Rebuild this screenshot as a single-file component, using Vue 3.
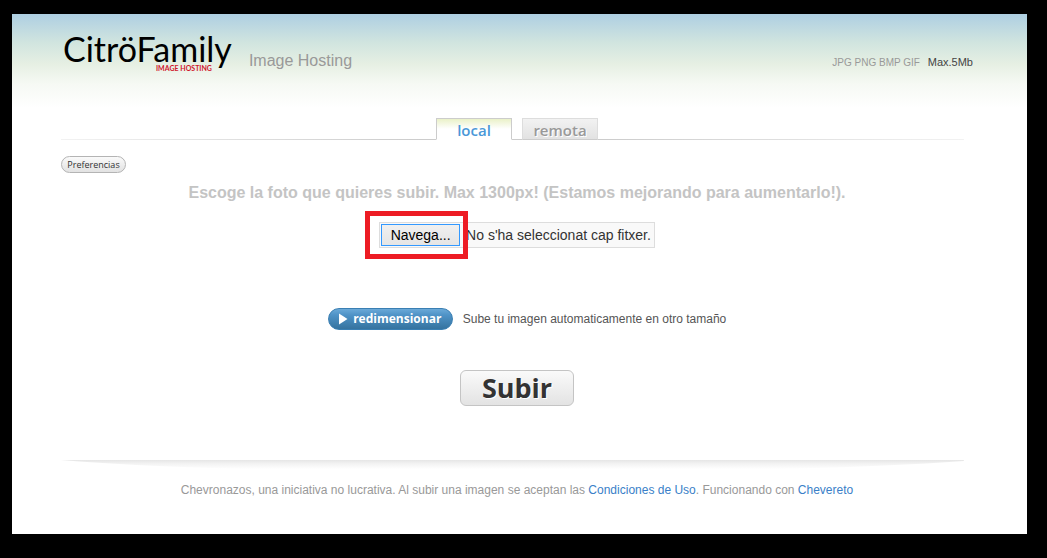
<script setup>
import { ref } from 'vue'

const tabs = [
  { id: 'local', label: 'local' },
  { id: 'remota', label: 'remota' }
]
const active = ref('local')
const picker = ref(null)
const fileName = ref("No s'ha seleccionat cap fitxer.")

function onPick(event) {
  const file = event.target.files[0]
  if (file) fileName.value = file.name
}
</script>

<template>
  <div class="frame">
    <div class="page">
      <header class="header">
        <a class="logo" href="#">
          <span class="brand">CitröFamily</span>
          <span class="sub">IMAGE HOSTING</span>
        </a>
        <h1 class="title">Image Hosting</h1>
        <p class="formats">JPG PNG BMP GIF <span class="max">Max.5Mb</span></p>
      </header>

      <nav class="tabs">
        <button
          v-for="tab in tabs"
          :key="tab.id"
          type="button"
          class="tab"
          :class="{ active: active === tab.id }"
          @click="active = tab.id"
        >{{ tab.label }}</button>
      </nav>

      <main class="main">
        <button type="button" class="prefs">Preferencias</button>
        <h2 class="lead">Escoge la foto que quieres subir. Max 1300px! (Estamos mejorando para aumentarlo!).</h2>
        <div class="file">
          <input ref="picker" class="picker" type="file" aria-label="Imagen" tabindex="-1" @change="onPick">
          <button type="button" class="browse" @click="picker.click()">Navega...</button>
          <span class="name">{{ fileName }}</span>
          <div class="highlight"></div>
        </div>
        <div class="resize">
          <button type="button" class="resize-btn">
            <svg width="9" height="12" viewBox="0 0 9 12" aria-hidden="true"><path d="M0 0.5L8.5 6L0 11.5Z" fill="#fff" /></svg>
            redimensionar
          </button>
          <span>Sube tu imagen automaticamente en otro tamaño</span>
        </div>
        <button type="button" class="submit">Subir</button>
      </main>

      <footer class="footer">
        <svg class="shade" viewBox="0 0 900 9" preserveAspectRatio="none" aria-hidden="true">
          <defs>
            <linearGradient id="shade" x1="0" y1="0" x2="0" y2="1">
              <stop offset="0" stop-color="#e6e6e6" />
              <stop offset="0.35" stop-color="#f1f1f1" />
              <stop offset="1" stop-color="#fff" />
            </linearGradient>
          </defs>
          <path d="M0 0H900V1Q830 6 720 9H180Q70 6 0 0Z" fill="url(#shade)" />
        </svg>
        <p class="legal">Chevronazos, una iniciativa no lucrativa. Al subir una imagen se aceptan las <a href="#">Condiciones de Uso</a>. Funcionando con <a href="#">Chevereto</a></p>
      </footer>
    </div>
  </div>
</template>

<style>
body {
  background: #000;
}
</style>

<style scoped>
.frame {
  box-sizing: border-box;
  min-height: 100vh;
  padding: 14px 20px 24px 12px;
  display: flex;
  background: #000;
  font-family: "Liberation Sans", Arial, sans-serif;
  font-size: 12px;
}
.page {
  box-sizing: border-box;
  flex: 1;
  padding: 0 54px 0 49px;
  background: linear-gradient(#aecfe2 0, #d0e4df 28px, #e6efe3 50px, #f6f9f4 70px, #fff 94px);
}
h1, h2, p {
  margin: 0;
  font-weight: normal;
}
button {
  padding: 0;
  cursor: pointer;
}
.header {
  display: flex;
  align-items: flex-start;
  height: 104px;
}
.logo {
  padding: 19px 0 0 2px;
  color: #000;
  text-decoration: none;
  font-family: Lato, sans-serif;
}
.brand {
  display: block;
  font-size: 34px;
  line-height: 32px;
}
.sub {
  display: block;
  padding-right: 20px;
  color: #d0142c;
  font-weight: bold;
  font-size: 7px;
  line-height: 6px;
  text-align: right;
}
.title {
  margin-left: 17px;
  padding-top: 37px;
  color: #999;
  font-size: 16px;
  line-height: 20px;
}
.formats {
  margin-left: auto;
  padding-top: 40px;
  color: #999;
  font-size: 10px;
  line-height: 16px;
}
.max {
  margin-left: 5px;
  color: #444;
  font-size: 11px;
}
.tabs {
  display: flex;
  justify-content: center;
  align-items: flex-end;
  gap: 10px;
  height: 22px;
  background: linear-gradient(90deg, #f2f2f2, #ccc 40%, #ccc 60%, #f2f2f2) left bottom / 99% 1px no-repeat;
}
.tab {
  box-sizing: border-box;
  width: 76px;
  height: 22px;
  padding-top: 1px;
  border: 1px solid #ddd;
  border-bottom-color: #ccc;
  background: linear-gradient(#f2f2f2, #e2e2e2);
  color: #999;
  font: 600 15px/20px "Open Sans", sans-serif;
  text-shadow: 1px 1px 0 #fff;
}
.tab.active {
  border-color: #ccc;
  border-bottom-color: #fff;
  background: linear-gradient(#eaf1c8, #fff 10px);
  color: #4a98d8;
}
.main {
  display: flex;
  flex-direction: column;
  align-items: center;
  padding-top: 16px;
}
.prefs {
  box-sizing: border-box;
  align-self: flex-start;
  width: 65px;
  height: 17px;
  border: 1px solid #b4b4b4;
  border-radius: 9px;
  background: linear-gradient(#fafafa, #e2e2e2);
  color: #333;
  font: 9px/14px "Open Sans", sans-serif;
}
.lead {
  margin-top: 10px;
  color: #c4c4c4;
  font-weight: bold;
  font-size: 16px;
  line-height: 20px;
}
.file {
  position: relative;
  box-sizing: border-box;
  display: flex;
  align-items: center;
  gap: 6px;
  height: 26px;
  margin-top: 19px;
  padding: 0 3px 0 1px;
  border: 1px solid #ddd;
  background: #f9f9f9;
  color: #333;
  font-size: 14px;
}
.picker {
  position: absolute;
  width: 1px;
  height: 1px;
  opacity: 0;
  pointer-events: none;
}
.browse {
  box-sizing: border-box;
  width: 79px;
  height: 22px;
  border: 1px solid #3399ff;
  background: linear-gradient(#f0f0f0, #e5e5e5);
  color: #000;
  font: 14px/20px "Liberation Sans", Arial, sans-serif;
}
.highlight {
  position: absolute;
  left: -15px;
  top: -12px;
  box-sizing: border-box;
  width: 103px;
  height: 48px;
  border: 5px solid #ed1c24;
  pointer-events: none;
}
.resize {
  display: flex;
  align-items: center;
  gap: 10px;
  margin-top: 60px;
  margin-right: -20px;
  color: #555;
}
.resize-btn {
  display: flex;
  box-sizing: border-box;
  align-items: center;
  justify-content: center;
  gap: 5px;
  width: 125px;
  height: 22px;
  border: 1px solid #3a7fb3;
  border-radius: 11px;
  background: linear-gradient(#6aa9d8, #4f93c7 30%, #35739f);
  color: #fff;
  font: bold 12px/18px "Open Sans", sans-serif;
}
.submit {
  box-sizing: border-box;
  width: 114px;
  height: 36px;
  margin-top: 40px;
  border: 1px solid #c4c4c4;
  border-radius: 6px;
  background: linear-gradient(#fafafa, #e3e3e3);
  color: #333;
  font: bold 27px/32px "Open Sans", sans-serif;
  text-shadow: 1px 1px 0 #fff;
}
.footer {
  margin-top: 54px;
  padding-bottom: 34px;
}
.shade {
  display: block;
  width: 99%;
  height: 9px;
}
.legal {
  margin-top: 13px;
  color: #999;
  line-height: 16px;
  text-align: center;
}
.legal a {
  color: #3a7fc8;
  text-decoration: none;
}
</style>
